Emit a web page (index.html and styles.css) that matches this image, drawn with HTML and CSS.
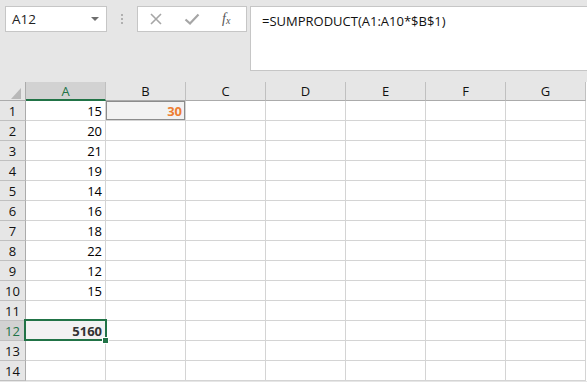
FILE: index.html
```html
<!DOCTYPE html>
<html lang="en">
<head>
  <meta charset="UTF-8" />
  <title>Book1 - SUMPRODUCT</title>
  <link rel="stylesheet" href="styles.css">
</head>
<body>

  <div class="formula-bar">
    <div class="name-box">
      <span>A12</span>
      <span class="caret"></span>
    </div>
    <div class="grip"><i></i><i></i><i></i></div>
    <div class="fx-buttons">
      <svg class="btn-icon" width="14" height="14" viewBox="0 0 14 14">
        <path d="M2 2 L12 12 M12 2 L2 12" stroke="#a6a6a6" stroke-width="1.6" fill="none" />
      </svg>
      <svg class="btn-icon" width="16" height="14" viewBox="0 0 16 14">
        <path d="M1.5 7.5 L6 11.5 L14.5 2.5" stroke="#a6a6a6" stroke-width="2.2" fill="none" />
      </svg>
      <span class="fx">f<sub>x</sub></span>
    </div>
    <div class="formula-input">=SUMPRODUCT(A1:A10*$B$1)</div>
  </div>

  <div class="sheet">
    <div class="corner">
      <svg width="26" height="19" viewBox="0 0 26 19"><polygon points="11,17 21,17 21,6" fill="#b8b8b8" /></svg>
    </div>
    <div class="col-head active">A</div>
    <div class="col-head">B</div>
    <div class="col-head">C</div>
    <div class="col-head">D</div>
    <div class="col-head">E</div>
    <div class="col-head">F</div>
    <div class="col-head">G</div>

    <div class="row-head">1</div>
    <div class="cell num">15</div>
    <div class="cell num marked">30</div>
    <div class="cell"></div><div class="cell"></div><div class="cell"></div><div class="cell"></div><div class="cell"></div>

    <div class="row-head">2</div>
    <div class="cell num">20</div>
    <div class="cell"></div><div class="cell"></div><div class="cell"></div><div class="cell"></div><div class="cell"></div><div class="cell"></div>

    <div class="row-head">3</div>
    <div class="cell num">21</div>
    <div class="cell"></div><div class="cell"></div><div class="cell"></div><div class="cell"></div><div class="cell"></div><div class="cell"></div>

    <div class="row-head">4</div>
    <div class="cell num">19</div>
    <div class="cell"></div><div class="cell"></div><div class="cell"></div><div class="cell"></div><div class="cell"></div><div class="cell"></div>

    <div class="row-head">5</div>
    <div class="cell num">14</div>
    <div class="cell"></div><div class="cell"></div><div class="cell"></div><div class="cell"></div><div class="cell"></div><div class="cell"></div>

    <div class="row-head">6</div>
    <div class="cell num">16</div>
    <div class="cell"></div><div class="cell"></div><div class="cell"></div><div class="cell"></div><div class="cell"></div><div class="cell"></div>

    <div class="row-head">7</div>
    <div class="cell num">18</div>
    <div class="cell"></div><div class="cell"></div><div class="cell"></div><div class="cell"></div><div class="cell"></div><div class="cell"></div>

    <div class="row-head">8</div>
    <div class="cell num">22</div>
    <div class="cell"></div><div class="cell"></div><div class="cell"></div><div class="cell"></div><div class="cell"></div><div class="cell"></div>

    <div class="row-head">9</div>
    <div class="cell num">12</div>
    <div class="cell"></div><div class="cell"></div><div class="cell"></div><div class="cell"></div><div class="cell"></div><div class="cell"></div>

    <div class="row-head">10</div>
    <div class="cell num">15</div>
    <div class="cell"></div><div class="cell"></div><div class="cell"></div><div class="cell"></div><div class="cell"></div><div class="cell"></div>

    <div class="row-head">11</div>
    <div class="cell"></div>
    <div class="cell"></div><div class="cell"></div><div class="cell"></div><div class="cell"></div><div class="cell"></div><div class="cell"></div>

    <div class="row-head active">12</div>
    <div class="cell num result selected">5160</div>
    <div class="cell"></div><div class="cell"></div><div class="cell"></div><div class="cell"></div><div class="cell"></div><div class="cell"></div>

    <div class="row-head">13</div>
    <div class="cell"></div>
    <div class="cell"></div><div class="cell"></div><div class="cell"></div><div class="cell"></div><div class="cell"></div><div class="cell"></div>

    <div class="row-head">14</div>
    <div class="cell"></div>
    <div class="cell"></div><div class="cell"></div><div class="cell"></div><div class="cell"></div><div class="cell"></div><div class="cell"></div>
  </div>

</body>
</html>
```

FILE: styles.css
```css
body {
  margin: 0;
  padding: 0;
  width: 587px;
  height: 382px;
  overflow: hidden;
  background: #e6e6e6;
  font-family: 'Open Sans', sans-serif;
  color: #111;
}

/* formula bar */

.formula-bar {
  height: 82px;
  box-sizing: border-box;
  padding: 6px 0 0 5px;
  display: flex;
  align-items: flex-start;
}

.name-box {
  width: 102px;
  height: 26px;
  box-sizing: border-box;
  background: #fff;
  border: 1px solid #c6c6c6;
  display: flex;
  align-items: center;
  justify-content: space-between;
  padding: 0 6px 0 6px;
  font-size: 13.5px;
  color: #222;
}

.caret {
  width: 0;
  height: 0;
  border-left: 4px solid transparent;
  border-right: 4px solid transparent;
  border-top: 4px solid #6e6e6e;
  margin-right: 1px;
}

.grip {
  width: 30px;
  height: 26px;
  display: flex;
  flex-direction: column;
  align-items: center;
  justify-content: center;
  gap: 2px;
}

.grip i {
  display: block;
  width: 2px;
  height: 2px;
  background: #b0b0b0;
}

.fx-buttons {
  width: 110px;
  height: 26px;
  box-sizing: border-box;
  background: #fff;
  border: 1px solid #c6c6c6;
  display: flex;
  align-items: center;
  padding: 0 0 0 11px;
  gap: 21px;
}

.fx {
  font-family: 'Liberation Serif', serif;
  font-style: italic;
  font-size: 14px;
  color: #555;
  margin-left: 1px;
}

.fx sub {
  font-size: 10px;
  vertical-align: -1px;
}

.formula-input {
  flex: 1;
  height: 65px;
  margin-left: 3px;
  box-sizing: border-box;
  background: #fff;
  border: 1px solid #c6c6c6;
  border-right: none;
  padding: 5px 0 0 11px;
  font-size: 13px;
  color: #111;
}

/* sheet grid */

.sheet {
  display: grid;
  grid-template-columns: 26px repeat(7, 80px);
  grid-template-rows: 19px;
  grid-auto-rows: 20px;
  background: #fff;
  font-size: 13px;
}

.corner,
.col-head,
.row-head,
.cell {
  box-sizing: border-box;
  border-right: 1px solid #d4d4d4;
  border-bottom: 1px solid #d4d4d4;
}

.corner {
  background: #e6e6e6;
  border-right: 1px solid #ababab;
  border-bottom: 1px solid #ababab;
}

.corner svg {
  display: block;
}

.col-head {
  background: #e6e6e6;
  border-right: 1px solid #c0c0c0;
  border-bottom: 1px solid #ababab;
  text-align: center;
  line-height: 18px;
  color: #111;
}

.col-head.active {
  background: #d2d2d2;
  color: #217346;
  border-bottom: 2px solid #217346;
}

.row-head {
  background: #e6e6e6;
  border-right: 1px solid #ababab;
  border-bottom: 1px solid #c0c0c0;
  text-align: center;
  line-height: 20px;
  color: #111;
}

.row-head.active {
  background: #d2d2d2;
  color: #217346;
}

.cell {
  position: relative;
  line-height: 20px;
  padding: 0 3px;
  color: #000;
}

.num {
  text-align: right;
}

.marked {
  background: #f2f2f2;
  box-shadow: inset 0 0 0 1px #8c8c8c;
  color: #ed7d31;
  font-weight: bold;
}

.result {
  background: #f2f2f2;
  font-weight: bold;
  color: #333;
}

.selected::after {
  content: "";
  position: absolute;
  left: -2px;
  top: -2px;
  right: -2px;
  bottom: -1px;
  border: 2px solid #217346;
}

.selected::before {
  content: "";
  position: absolute;
  right: -4px;
  bottom: -4px;
  width: 5px;
  height: 5px;
  background: #217346;
  border: 1px solid #fff;
  z-index: 2;
}
```
